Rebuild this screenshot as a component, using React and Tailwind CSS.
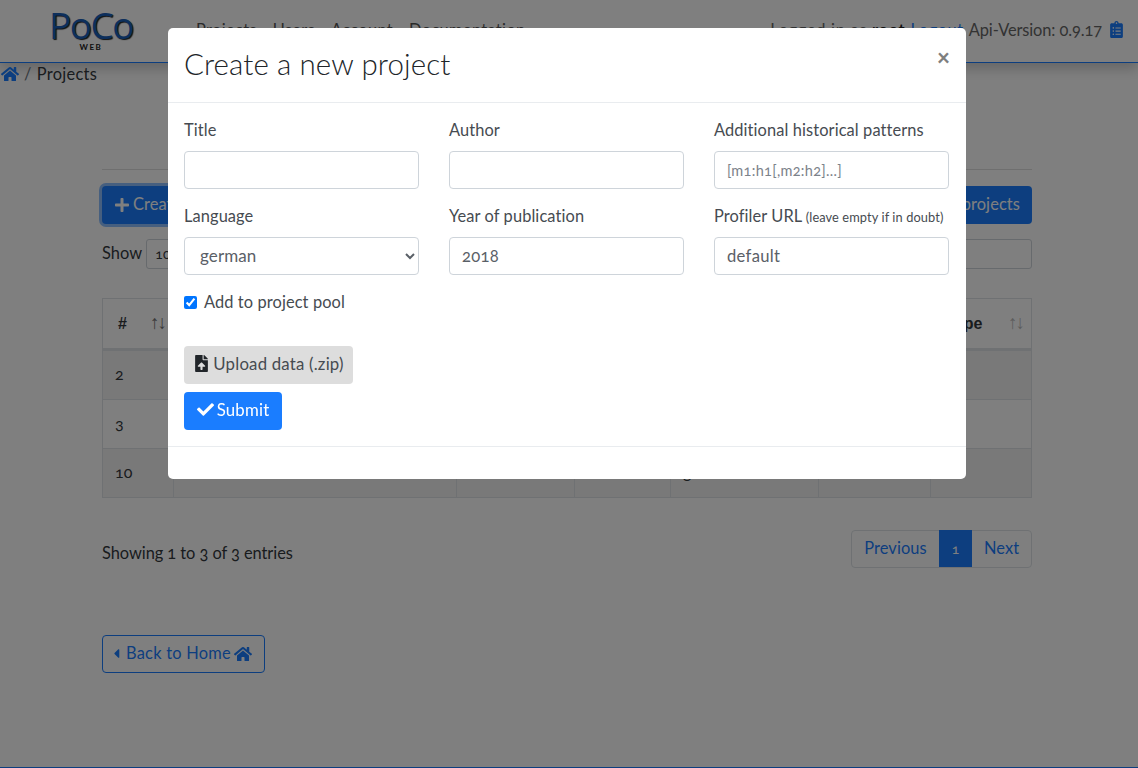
import { FaHome, FaClipboardList, FaPlus, FaFileUpload, FaCheck, FaCaretLeft } from "react-icons/fa";

const font = { fontFamily: "Lato, 'Open Sans', sans-serif" };

const columns = ["#", "Title", "Author", "Year", "Language", "Pages", "Type"];
const widths = ["w-[71px]", "w-[283px]", "w-[118px]", "w-[96px]", "w-[148px]", "w-[112px]", "w-[101px]"];
const rows = [
  { id: 2, title: "Grenzboten", author: "Anonym", year: "1841", lang: "german", pages: "10", striped: true, height: "h-[50px]" },
  { id: 3, title: "Faust", author: "Goethe", year: "1808", lang: "german", pages: "12", striped: false, height: "h-[49px]" },
  { id: 10, title: "Simon", author: "Grimm", year: "1668", lang: "german", pages: "8", striped: true, height: "h-[49px]" },
];

function Field({ label, small, placeholder, value }) {
  return (
    <div className="flex flex-col">
      <label className="h-[24px] leading-[22px] mb-[8px] whitespace-nowrap text-[16.4px]">
        {label}
        {small && <span className="text-[12.8px]"> {small}</span>}
      </label>
      <input
        readOnly
        placeholder={placeholder}
        value={value}
        className="h-[38px] w-full border border-[#ced4da] rounded-[4px] px-[12px] pb-[1px] text-[16.6px] tracking-[0.3px] text-[#5a6067] placeholder:text-[14.5px] placeholder:text-[#7c828a] oldstyle-nums"
      />
    </div>
  );
}

function CreateProjectModal() {
  return (
    <div className="fixed inset-0 bg-black/50">
      <div className="mt-[28px] ml-[168px] w-[798px] h-[451px] bg-white rounded-[5px] text-[#464b51] tracking-[0.1px] flex flex-col">
        <div className="h-[75px] shrink-0 border-b border-[#e9ecef] px-[16px] flex items-center justify-between">
          <h5 className="text-[29.5px] font-light leading-none text-[#212529] pb-[3px]">Create a new project</h5>
          <span className="text-[24px] font-bold text-[#7f7f7f] pb-[18px]">×</span>
        </div>
        <div className="px-[16px] pt-[16px] flex-1">
          <div className="grid grid-cols-[235px_235px_235px] gap-x-[30px] gap-y-[16px]">
            <Field label="Title" value="" />
            <Field label="Author" value="" />
            <Field label="Additional historical patterns" placeholder="[m1:h1[,m2:h2]...]" value="" />
            <div className="flex flex-col">
              <label className="h-[24px] leading-[22px] mb-[8px] text-[16.4px]">Language</label>
              <select defaultValue="german" className="h-[38px] w-full border border-[#ced4da] rounded-[4px] pl-[11px] pr-[12px] pb-[1px] text-[17px] text-[#5a6067] bg-white">
                <option value="german">german</option>
              </select>
            </div>
            <Field label="Year of publication" value="2018" />
            <Field label="Profiler URL" small="(leave empty if in doubt)" value="default" />
          </div>
          <label className="flex items-center gap-[7px] mt-[15px] h-[24px] text-[16.4px]">
            <input type="checkbox" defaultChecked className="w-[13px] h-[13px] m-0" />
            Add to project pool
          </label>
          <div className="mt-[32px] flex flex-col items-start gap-[8px]">
            <button className="h-[38px] w-[169px] rounded-[4px] bg-[#dddddd] text-[#464b51] flex items-center justify-center gap-[3px] pb-[3px] text-[16.8px] tracking-[0.2px]">
              <FaFileUpload className="text-[#212529] text-[17px]" />
              Upload data (.zip)
            </button>
            <button className="h-[38px] w-[98px] rounded-[4px] bg-[#1a7dff] text-white flex items-center justify-center gap-[3px] pb-[3px] text-[16.8px] tracking-[0.2px]">
              <FaCheck className="text-[17px]" />
              Submit
            </button>
          </div>
        </div>
        <div className="h-[33px] shrink-0 border-t border-[#e9ecef]"></div>
      </div>
    </div>
  );
}

export default function App() {
  return (
    <div style={font} className="relative h-[768px] overflow-hidden bg-white text-[#33383d] text-[16.4px] tracking-[0.1px] flex flex-col border-b border-[#1a7dff] oldstyle-nums">
      {/* navbar */}
      <nav className="h-[63px] shrink-0 border-b border-[#1a7dff] shadow-[0_6px_12px_rgba(0,0,0,0.2)] flex items-center pl-[49px] pr-[13px]">
        <div className="w-[84px] flex flex-col items-center leading-none">
          <span className="text-[37px] text-[#1a5fb8] font-['Open_Sans'] tracking-[-1.5px] leading-[28px] [text-shadow:1px_1px_1px_#222]">PoCo</span>
          <span className="text-[8px] font-bold tracking-[1.5px] text-[#222] mt-[4px]">WEB</span>
        </div>
        <div className="ml-[63px] flex gap-[16px] text-[#555] pb-[2px] tracking-[0.35px]">
          <span>Projects</span>
          <span>Users</span>
          <span>Account</span>
          <span>Documentation</span>
        </div>
        <div className="ml-auto flex items-center gap-[5px] text-[#666] pb-[2px]">
          <span className="tracking-[0.7px]">Logged in as <b className="text-[#222]">root</b></span>
          <span className="text-[#1a7dff] tracking-[0.6px]">Logout</span>
          <span className="tracking-[-0.1px] mr-[1px]">Api-Version: 0.9.17</span>
          <FaClipboardList className="text-[#1a7dff] text-[17px]" />
        </div>
      </nav>
      <div className="h-[24px] flex items-center pl-[1px] gap-[5px] mt-[-1px] shrink-0 tracking-[0.3px]">
        <FaHome className="text-[#1a7dff] text-[18px]" />
        <span className="text-[#6c757d]">/</span>
        <span>Projects</span>
      </div>

      <main className="ml-[102px] w-[930px] flex-1">
        <hr className="mt-[83px] border-[#dfdfdf]" />
        <div className="mt-[16px] flex justify-between">
          <button className="h-[38px] px-[12px] pb-[1px] rounded-[4px] bg-[#1a7dff] text-white flex items-center gap-[3px] ring-[3px] ring-[#1a7dff]/50">
            <FaPlus className="text-[16px]" />
            Create new project
          </button>
          <button className="h-[38px] px-[12px] pb-[1px] rounded-[4px] bg-[#1a7dff] text-white">Upload projects</button>
        </div>
        <div className="mt-[15px] h-[30px] flex justify-between items-center">
          <div className="flex items-center gap-[4px] pb-[1px]">
            Show
            <span className="h-[30px] w-[70px] border border-[#ced4da] rounded-[3px] flex items-center pl-[8px] text-[14px]">10</span>
            entries
          </div>
          <div className="flex items-center gap-[4px]">
            Search:
            <span className="h-[30px] w-[200px] border border-[#ced4da] rounded-[3px]"></span>
          </div>
        </div>
        <table className="mt-[29px] w-[929px] table-fixed border-collapse border border-[#dee2e6] text-[16px]">
          <thead>
            <tr className="h-[51px] border-b-[3px] border-[#dee2e6]">
              {columns.map((c, i) => (
                <th key={c} className={`${widths[i]} border-x border-[#dee2e6] pl-[15px] pr-[8px] text-left`}>
                  <div className="flex items-center justify-between font-['Liberation_Sans'] text-[16px]">
                    <span>{c}</span>
                    <span className={`font-normal text-[19px] tracking-[-2px] ${i === 0 ? "text-[#777]" : "text-[#bbb]"}`}>↑↓</span>
                  </div>
                </th>
              ))}
            </tr>
          </thead>
          <tbody>
            {rows.map((r) => (
              <tr key={r.id} className={`${r.height} border-b border-[#dee2e6] ${r.striped ? "bg-[#f2f2f2]" : ""}`}>
                {[r.id, r.title, r.author, r.year, r.lang, r.pages, ""].map((v, i) => (
                  <td key={i} className="border-x border-[#dee2e6] px-[12px] pb-[2px]">{v}</td>
                ))}
              </tr>
            ))}
          </tbody>
        </table>
        <div className="mt-[32px] flex justify-between items-start">
          <span className="mt-[11px] tracking-[-0.05px]">Showing 1 to 3 of 3 entries</span>
          <div className="flex h-[38px] border border-[#dee2e6] rounded-[4px] text-[#1a7dff] pb-[1px]">
            <span className="w-[87px] flex items-center justify-center">Previous</span>
            <span className="w-[33px] -my-px bg-[#1a7dff] text-white text-[14px] flex items-center justify-center">1</span>
            <span className="w-[59px] flex items-center justify-center">Next</span>
          </div>
        </div>
        <button className="mt-[67px] h-[38px] w-[163px] rounded-[4px] pl-[6px] pb-[1px] border border-[#1a7dff] text-[#1a7dff] flex items-center gap-[2px] tracking-[0.25px]">
          <FaCaretLeft className="text-[15px]" />
          Back to Home
          <FaHome className="text-[18px] ml-[1px]" />
        </button>
      </main>

      <CreateProjectModal />
    </div>
  );
}
